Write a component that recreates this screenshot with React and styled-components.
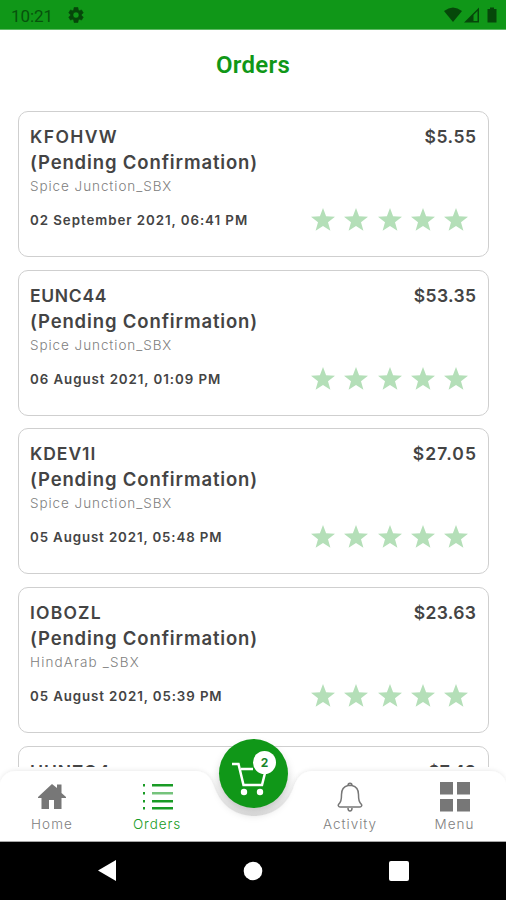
import React from "react";
import styled, { createGlobalStyle } from "styled-components";

const Global = createGlobalStyle`
  * { box-sizing: border-box; }
  body { margin: 0; background: #fff; font-family: Inter, sans-serif; }
`;

const Screen = styled.div`
  width: 506px;
  height: 900px;
  display: flex;
  flex-direction: column;
  overflow: hidden;
  background: #fff;
`;

const StatusBar = styled.header`
  flex: 0 0 30px;
  display: flex;
  align-items: center;
  padding: 1px 8px 0 11px;
  background: #109718;
  border-bottom: 1px solid #5fb965;
  color: #07520c;
`;

const Clock = styled.span`
  font: 400 17px/26px Roboto, sans-serif;
  width: 56px;
  letter-spacing: -0.1px;
  padding-top: 1px;
`;

const StatusIcons = styled.div`
  margin-left: auto;
  display: flex;
  align-items: center;
`;

const Title = styled.h1`
  flex: 0 0 81px;
  margin: 0;
  padding-top: 20px;
  text-align: center;
  color: #109718;
  font: 600 24px/31px Roboto, sans-serif;
  letter-spacing: 0.3px;
`;

const OrderList = styled.main`
  flex: 0 0 656px;
  overflow: hidden;
  padding: 0 17.5px;
  display: flex;
  flex-direction: column;
  gap: 12.7px;
`;

const Card = styled.article`
  flex: 0 0 146px;
  border: 1.5px solid #cfcfcf;
  border-radius: 10px;
  padding: 12px 11.5px 0;
  color: #444;
`;

const Row = styled.div`
  display: flex;
  justify-content: space-between;
  align-items: center;
`;

const Strong = styled.div`
  font-size: ${(p) => p.$size || 17.5}px;
  font-weight: 600;
  line-height: ${(p) => (p.$size ? 25 : 26)}px;
  white-space: nowrap;
  letter-spacing: ${(p) => p.$track || 0}px;
  margin-right: ${(p) => -(p.$track || 0)}px;
`;

const Venue = styled.div`
  font-size: 13.5px;
  line-height: 22px;
  color: #808080;
  font-weight: 300;
  letter-spacing: ${(p) => p.$track}px;
`;

const Placed = styled.div`
  font-size: 13.3px;
  line-height: 34px;
  font-weight: 600;
  white-space: nowrap;
  letter-spacing: ${(p) => p.$track}px;
`;

const BottomRow = styled(Row)`
  margin-top: 6px;
`;

const Stars = styled.div`
  display: flex;
  gap: 9.2px;
  padding-right: 8px;
`;

const TabBar = styled.nav`
  position: relative;
  flex: 0 0 75px;
  display: flex;
  padding-top: 14px;
  border-bottom: 1px solid #aaa;
`;

const BarShape = styled.svg`
  position: absolute;
  left: 0;
  top: -6px;
  overflow: visible;
`;

const Tab = styled.div`
  position: relative;
  width: ${(p) => p.$width}px;
  display: flex;
  flex-direction: column;
  align-items: center;
  color: ${(p) => (p.$active ? "#199b25" : "#777")};
`;

const TabLabel = styled.span`
  margin-top: 1px;
  font-size: 13.5px;
  line-height: 20px;
  font-weight: 300;
  letter-spacing: ${(p) => p.$track}px;
  color: ${(p) => (p.$active ? "#199b25" : "#808080")};
`;

const CartButton = styled.div`
  position: absolute;
  left: 219px;
  top: -28.5px;
  width: 69px;
  height: 69px;
  border-radius: 50%;
  background: #109718;
  box-shadow: 0 6px 10px rgba(0, 0, 0, 0.18);
`;

const Badge = styled.span`
  position: absolute;
  left: 34px;
  top: 12px;
  width: 23px;
  height: 23px;
  border-radius: 50%;
  background: #fff;
  color: #17852a;
  text-align: center;
  font-size: 12px;
  line-height: 23px;
  font-weight: 700;
`;

const SystemNav = styled.footer`
  flex: 0 0 58px;
  background: #000;
  display: grid;
  grid-template-columns: 146px 146px 146px;
  justify-content: center;
  align-items: center;
  justify-items: center;
`;

const orders = [
  { id: "KFOHVW", idTrack: 1.4, price: "$5.55", priceTrack: 0.5, venue: "Spice Junction_SBX", venueTrack: 0.93, date: "02 September 2021, 06:41 PM", dateTrack: 0.95 },
  { id: "EUNC44", idTrack: 0.7, price: "$53.35", priceTrack: 0.35, venue: "Spice Junction_SBX", venueTrack: 0.93, date: "06 August 2021, 01:09 PM", dateTrack: 0.94 },
  { id: "KDEV1I", idTrack: 0.95, price: "$27.05", priceTrack: 1.1, venue: "Spice Junction_SBX", venueTrack: 0.93, date: "05 August 2021, 05:48 PM", dateTrack: 0.88 },
  { id: "IOBOZL", idTrack: 1.2, price: "$23.63", priceTrack: 0.35, venue: "HindArab _SBX", venueTrack: 1.15, date: "05 August 2021, 05:39 PM", dateTrack: 0.9 },
  { id: "HUNZG4", idTrack: 0.9, price: "$7.43", priceTrack: 0 },
];

const Star = () => (
  <svg width="24" height="24" viewBox="0 0 24 24" fill="#b4dfb8">
    <path d="M12 0l3.100 8.300 8.900.400-7 5.500 2.400 8.600-7.400-4.900-7.400 4.900L7 14.200 0 8.700l8.900-.400z" />
  </svg>
);

const OrderCard = ({ order }) => (
  <Card>
    <Row>
      <Strong $track={order.idTrack}>{order.id}</Strong>
      <Strong $track={order.priceTrack}>{order.price}</Strong>
    </Row>
    {order.venue && (
      <>
        <Strong $size={18.5} $track={0.86}>(Pending Confirmation)</Strong>
        <Venue $track={order.venueTrack}>{order.venue}</Venue>
        <BottomRow>
          <Placed $track={order.dateTrack}>{order.date}</Placed>
          <Stars>{[0, 1, 2, 3, 4].map((n) => <Star key={n} />)}</Stars>
        </BottomRow>
      </>
    )}
  </Card>
);

const GearIcon = () => (
  <svg width="18" height="18" viewBox="0 0 24 24" fill="#06470a" stroke="#06470a" strokeWidth="0.8">
    <path fillRule="evenodd" d="M19.4 13c.1-.7.1-1.300 0-2l2.300-1.800-2.300-4-2.700 1.100-1.700-1L14.600 2h-5.200L9 5.300l-1.700 1-2.700-1.100-2.300 4L4.600 11c-.1.700-.1 1.300 0 2l-2.300 1.800 2.300 4 2.700-1.100 1.700 1 .4 3.300h5.200l.4-3.300 1.700-1 2.700 1.100 2.300-4zM12 7.900a4.100 4.100 0 1 1 0 8.200 4.100 4.100 0 0 1 0-8.200z" />
  </svg>
);

export default function App() {
  return (
    <Screen>
      <Global />
      <StatusBar>
        <Clock>10:21</Clock>
        <GearIcon />
        <StatusIcons>
          <svg width="54" height="18" viewBox="0 0 54 18" fill="#06470a">
            <path d="M0 5Q9-2 18 5L9 16z" />
            <path fillRule="evenodd" d="M35 1.500v15H20zM33.500 5v10H29.500V9z" />
            <path d="M46 1.500h4V3h2.500v13.500h-9V3H46z" />
          </svg>
        </StatusIcons>
      </StatusBar>
      <Title>Orders</Title>
      <OrderList>
        {orders.map((order) => <OrderCard key={order.id} order={order} />)}
      </OrderList>
      <TabBar>
        <BarShape width="506" height="81" viewBox="0 0 506 81">
          <defs>
            <filter id="barShadow" x="-5%" y="-20%" width="110%" height="140%">
              <feDropShadow dx="0" dy="-1" stdDeviation="2" floodColor="#000" floodOpacity="0.08" />
            </filter>
            <linearGradient id="dip" x1="0" y1="0" x2="0" y2="1">
              <stop offset="0" stopColor="#fff" />
              <stop offset="1" stopColor="#f0f0f0" />
            </linearGradient>
          </defs>
          <path d="M204 10H304L292 35Q280 56 254 56T216 35Z" fill="url(#dip)" />
          <path filter="url(#barShadow)" fill="#fff" d="M0 22Q4 10 17 10H193C207 10 211 17 215 28C222 46 237 55 254 55S286 46 293 28C297 17 301 10 315 10H489Q502 10 506 22V80H0Z" />
        </BarShape>
        <Tab $width={104}>
          <svg width="30" height="32" viewBox="0 0 30 32" fill="currentColor">
            <path d="M15 3L1 16v1h3.500v11h7.500v-9h5v9h7.500V17H29v-1l-4.500-4V3.500H20V7z" />
          </svg>
          <TabLabel $track={1.1}>Home</TabLabel>
        </Tab>
        <Tab $width={106} $active>
          <svg width="32" height="32" viewBox="0 0 32 32" fill="currentColor">
            <path d="M2 3h2v2.500H2zm9 0h21v2.500H11zM2 11h2v2.500H2zm0 8h2v2.500H2zm9 0h21v2.500H11zM2 26h2v2.500H2zm9 0h21v2.500H11z" />
            <path d="M11 11h21v2.500H11z" opacity=".6" />
          </svg>
          <TabLabel $active $track={0.9}>Orders</TabLabel>
        </Tab>
        <Tab $width={87} />
        <Tab $width={106}>
          <svg width="28" height="32" viewBox="0 0 28 32" fill="none" stroke="currentColor" strokeWidth="1.500">
            <path d="M12 4.500a2 2.300 0 0 1 4 0M12 4.500h4c4.500 1 6.500 4.500 6.500 9 0 6 .7 7.500 3 10 .8 1-.2 2.500-2 2.500h-19c-1.800 0-2.800-1.500-2-2.500 2.300-2.500 3-4 3-10 0-4.500 2-8 6.500-9zM12 27c0 4 4 4 4 0" />
          </svg>
          <TabLabel $track={1}>Activity</TabLabel>
        </Tab>
        <Tab $width={103}>
          <svg width="30" height="32" viewBox="0 0 30 32" fill="currentColor">
            <path d="M0 1h13v12.500H0zm17 0h13v12.500H17zM0 18h13v12.500H0zm17 0h13v12.500H17z" />
          </svg>
          <TabLabel $track={1}>Menu</TabLabel>
        </Tab>
        <CartButton>
          <svg width="69" height="69" viewBox="0 0 69 69" fill="none" stroke="#fff" strokeWidth="2.500">
            <path d="M13 25h6.500l5 21h18.500l3-12M22 30h12" />
            <circle cx="25" cy="53" r="3.200" fill="#fff" stroke="none" />
            <circle cx="41" cy="53" r="3.200" fill="#fff" stroke="none" />
          </svg>
          <Badge>2</Badge>
        </CartButton>
      </TabBar>
      <SystemNav>
        <svg width="20" height="24" viewBox="0 0 20 24"><path d="M19 1v21L1 11.500z" fill="#fff" /></svg>
        <svg width="20" height="20"><circle cx="10" cy="10" r="9.300" fill="#fff" /></svg>
        <svg width="20" height="20"><rect width="20" height="20" rx="2" fill="#fff" /></svg>
      </SystemNav>
    </Screen>
  );
}
